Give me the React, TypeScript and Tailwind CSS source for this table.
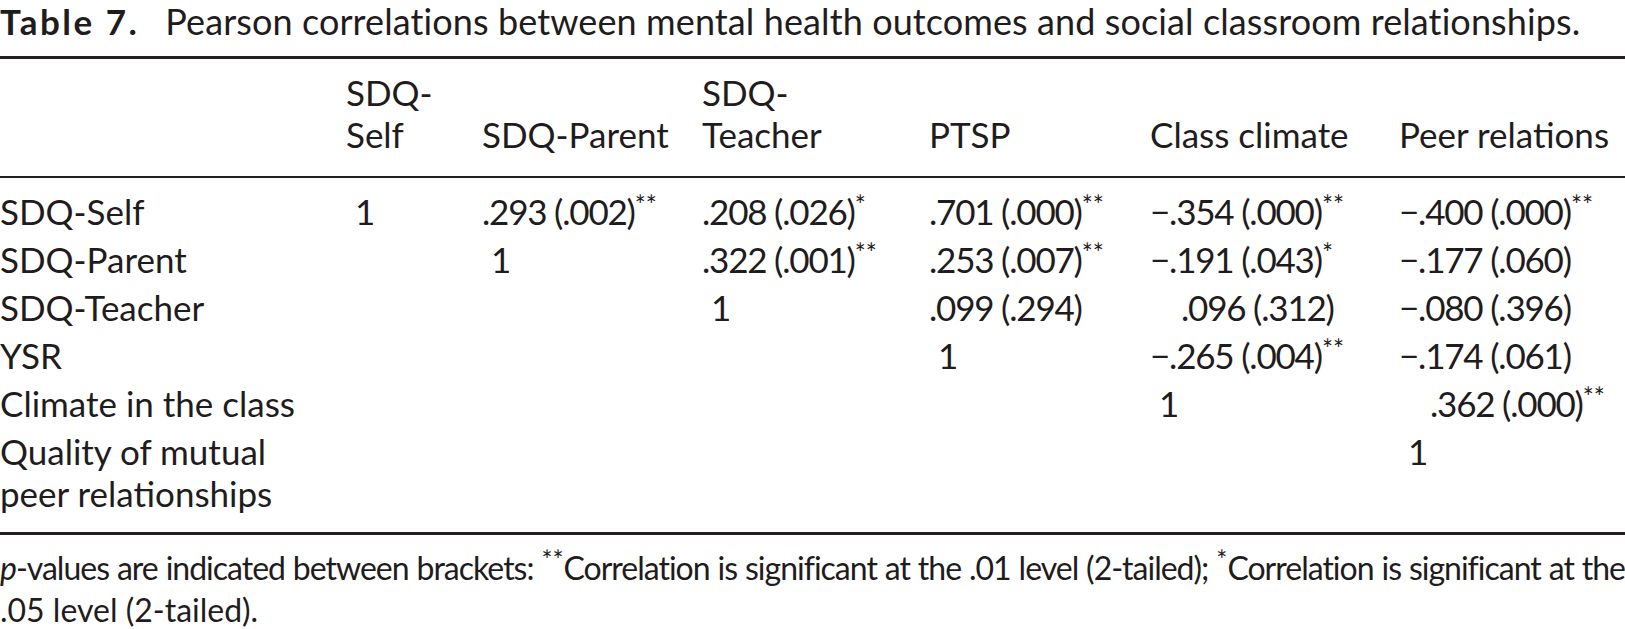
import React from 'react';

type Cell = { v: string; star?: string; indent?: boolean };

const columns = [
  { label: ['SDQ-', 'Self'], width: 'w-[136px]' },
  { label: ['SDQ-Parent'], width: 'w-[220px]' },
  { label: ['SDQ-', 'Teacher'], width: 'w-[227px]' },
  { label: ['PTSP'], width: 'w-[221px]' },
  { label: ['Class climate'], width: 'w-[249px]' },
  { label: ['Peer relations'], width: 'w-[226px]' },
];

const rows: { name: string[]; cells: Cell[] }[] = [
  {
    name: ['SDQ-Self'],
    cells: [
      { v: '1' },
      { v: '.293 (.002)', star: '**' },
      { v: '.208 (.026)', star: '*' },
      { v: '.701 (.000)', star: '**' },
      { v: '\u2212.354 (.000)', star: '**' },
      { v: '\u2212.400 (.000)', star: '**' },
    ],
  },
  {
    name: ['SDQ-Parent'],
    cells: [
      { v: '' },
      { v: '1' },
      { v: '.322 (.001)', star: '**' },
      { v: '.253 (.007)', star: '**' },
      { v: '\u2212.191 (.043)', star: '*' },
      { v: '\u2212.177 (.060)' },
    ],
  },
  {
    name: ['SDQ-Teacher'],
    cells: [
      { v: '' },
      { v: '' },
      { v: '1' },
      { v: '.099 (.294)' },
      { v: '.096 (.312)', indent: true },
      { v: '\u2212.080 (.396)' },
    ],
  },
  {
    name: ['YSR'],
    cells: [
      { v: '' },
      { v: '' },
      { v: '' },
      { v: '1' },
      { v: '\u2212.265 (.004)', star: '**' },
      { v: '\u2212.174 (.061)' },
    ],
  },
  {
    name: ['Climate in the class'],
    cells: [
      { v: '' },
      { v: '' },
      { v: '' },
      { v: '' },
      { v: '1' },
      { v: '.362 (.000)', star: '**', indent: true },
    ],
  },
  {
    name: ['Quality of mutual', 'peer relationships'],
    cells: [{ v: '' }, { v: '' }, { v: '' }, { v: '' }, { v: '' }, { v: '1' }],
  },
];

const Stars: React.FC<{ s?: string }> = ({ s }) =>
  s ? <span className="relative -top-[10px] text-[26px] leading-none tracking-normal">{s}</span> : null;

export default function App() {
  return (
    <div className="w-[1625px] h-[629px] overflow-hidden bg-white text-[#1f1c1d] [font-family:Lato,'Noto_Sans',sans-serif]">
      {/* Caption */}
      <h2 className="text-[35px] leading-[42px] whitespace-nowrap">
        <span className="font-bold tracking-[2.5px]">Table 7.</span>
        <span className="ml-[26px] text-[36px] tracking-[0.1px]">
          Pearson correlations between mental health outcomes and social classroom relationships.
        </span>
      </h2>

      <table className="mt-[14px] w-full table-fixed border-collapse border-t-[3px] border-b-[3px] border-[#231f20] text-[35px] leading-[42px]">
        <colgroup>
          <col className="w-[346px]" />
          {columns.map((c, i) => (
            <col key={i} className={c.width} />
          ))}
        </colgroup>
        <thead>
          <tr className="border-b-2 border-[#231f20]">
            <th className="pt-[12px] pb-[21px]" />
            {columns.map((c, i) => (
              <th key={i} className="pt-[12px] pb-[21px] align-bottom text-left font-normal leading-[42px] whitespace-nowrap">
                {c.label.map((l, j) => (
                  <div key={j}>{l}</div>
                ))}
              </th>
            ))}
          </tr>
        </thead>
        <tbody>
          {rows.map((r, i) => {
            const pad = i === 0 ? 'pt-[12px] pb-[3px]' : i === rows.length - 1 ? 'pt-[3px] pb-[18px]' : 'py-[3px]';
            return (
              <tr key={i}>
                <td className={`${pad} align-top whitespace-nowrap`}>
                  {r.name.map((n, j) => (
                    <div key={j}>{n}</div>
                  ))}
                </td>
                {r.cells.map((c, j) => (
                  <td key={j} className={`${pad} align-top whitespace-nowrap tracking-[-1.2px]`}>
                    <span className={c.indent ? 'pl-[31px]' : c.v === '1' ? 'pl-[9px]' : ''}>{c.v}</span>
                    <Stars s={c.star} />
                  </td>
                ))}
              </tr>
            );
          })}
        </tbody>
      </table>

      {/* Footnote */}
      <div className="pt-[12px] text-[32px] leading-[42px]">
        <p className="[text-align-last:justify] tracking-[-1px] [word-spacing:-4px]">
          <span className="italic">p</span>-values are indicated between brackets: <Stars s="**" />Correlation is significant at the .01 level
          (2-tailed); <Stars s="*" />Correlation is significant at the
        </p>
        <p>.05 level (2-tailed).</p>
      </div>
    </div>
  );
}
